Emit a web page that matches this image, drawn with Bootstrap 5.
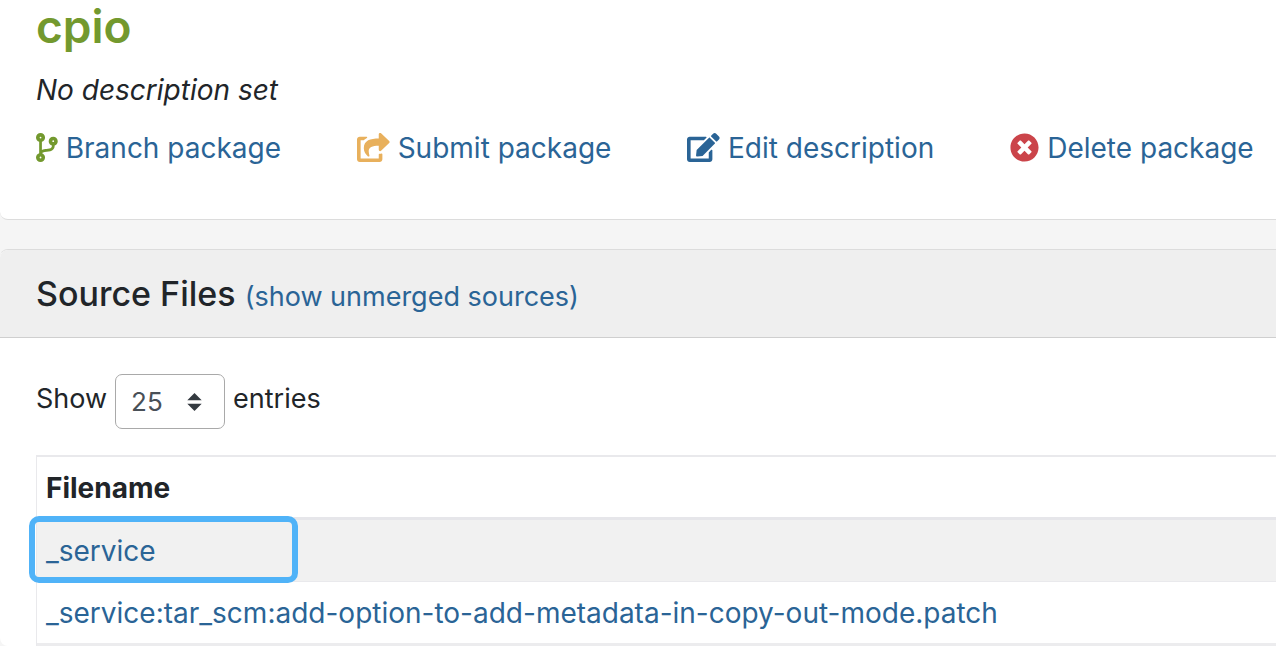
<!DOCTYPE html>
<html lang="en">
<head>
<meta charset="utf-8">
<meta name="viewport" content="width=device-width, initial-scale=1">
<title>cpio</title>
<link href="https://cdn.jsdelivr.net/npm/bootstrap@5.3.0/dist/css/bootstrap.min.css" rel="stylesheet">
<style>
  body { font-family: Inter, Roboto, sans-serif; font-size: 28px; line-height: 42px; color: #212529; background: #f5f5f5; overflow-x: hidden; }
  a { color: #2a6496; text-decoration: none; }
  a:hover { text-decoration: underline; }
  .panel { border: 1px solid #dcdcdc; border-left: 0; border-right: 0; border-radius: 8px 0 0 8px; }
  .package-panel { border-top: 0; border-radius: 0 0 0 8px; margin-bottom: 29px; }
  .panel .card-body, .panel .card-header { padding-left: 36px; padding-right: 0; }
  .package-panel .card-body { padding-top: 0; padding-bottom: 50px; }
  .package-name { font-size: 46px; line-height: 52px; font-weight: 600; color: #73992e; margin-bottom: 17px; }
  .description { margin-bottom: 16px; }
  .actions { gap: 76px; }
  .actions a { display: flex; align-items: center; gap: 8px; }
  .actions svg { height: 29px; margin-bottom: 2px; fill: currentColor; }
  .tone-branch { color: #73992e; }
  .tone-submit { color: #e8b05c; }
  .tone-delete { color: #cb444a; }
  .source-panel .card-header { background: #efefef; border-bottom: 1px solid #cfcfcf; border-radius: 8px 0 0 0; padding-top: 22px; padding-bottom: 22px; }
  .source-title { font-size: 34px; line-height: 43px; font-weight: 500; }
  .source-title a { font-size: 27px; line-height: 27px; font-weight: 400; }
  .source-panel .card-body { padding-top: 36px; padding-bottom: 0; }
  .length-row { gap: 8px; margin-bottom: 26px; font-size: 27px; line-height: 50px; }
  .length-select { width: 110px; height: 55px; padding: 0 16px 0 15px; font-size: 26px; color: #495057; border-color: #a9a9a9; border-radius: 7px;
    background-image: url("data:image/svg+xml,%3csvg xmlns='http://www.w3.org/2000/svg' viewBox='0 0 4 5'%3e%3cpath fill='%23343a40' d='M2 0L0 2h4zm0 5L0 3h4z'/%3e%3c/svg%3e");
    background-position: right 22px center; background-size: 15px 18px; }
  .files { border-collapse: separate; border-spacing: 0; border-left: 1px solid #e9e9ec; }
  .files th, .files td { color: #212529; border: 0; }
  .files th { padding: 10px 9px 8px; border-top: 2px solid #e9e9ec; border-bottom: 3px solid #e6e6ea; font-weight: 700; line-height: 42px; }
  .files td { padding: 11px 9px 9px; position: relative; border-bottom: 1px solid #e9e9ec; line-height: 41px; }
  .files tr.shaded td { background: #f1f1f1; }
  .files tr:last-child td { border-bottom: 3px solid #ececee; }
  .spotlight { position: absolute; left: -8px; top: -4px; width: 269px; height: 67px; border: 6px solid #50b3f8; border-radius: 10px; pointer-events: none; }
</style>
<script src="https://cdn.jsdelivr.net/npm/bootstrap@5.3.0/dist/js/bootstrap.bundle.min.js" defer></script>
</head>
<body>
<main>
  <section class="card panel package-panel">
    <div class="card-body">
      <h1 class="package-name">cpio</h1>
      <p class="description fst-italic">No description set</p>
      <ul class="actions list-unstyled d-flex mb-0 text-nowrap">
        <li><a href="#"><svg class="tone-branch" viewBox="0 0 384 512" aria-hidden="true"><path d="M384 144c0-44.2-35.8-80-80-80s-80 35.8-80 80c0 36.4 24.3 67.1 57.5 76.8-.6 16.1-4.2 28.5-11 36.9-15.4 19.2-49.3 22.4-85.2 25.7-28.2 2.6-57.4 5.4-81.3 16.9v-144c32.5-10.2 56-40.5 56-76.3 0-44.2-35.8-80-80-80S0 35.8 0 80c0 35.8 23.5 66.1 56 76.3v199.3C23.5 365.9 0 396.2 0 432c0 44.2 35.8 80 80 80s80-35.8 80-80c0-34-21.2-63.1-51.2-74.6 3.1-5.2 7.8-9.8 14.9-13.4 16.2-8.2 40.4-10.4 66.1-12.8 42.2-3.9 90-8.4 118.2-43.4 14-17.4 21.1-39.8 21.6-67.9 31.6-10.8 54.4-40.7 54.4-75.9zM80 64c8.800 0 16 7.200 16 16s-7.200 16-16 16-16-7.200-16-16 7.200-16 16-16zm0 384c-8.800 0-16-7.200-16-16s7.200-16 16-16 16 7.200 16 16-7.200 16-16 16zm224-320c8.800 0 16 7.200 16 16s-7.200 16-16 16-16-7.200-16-16 7.200-16 16-16z"/></svg><span>Branch package</span></a></li>
        <li><a href="#"><svg class="tone-submit" viewBox="0 0 576 512" aria-hidden="true"><path d="M568.482 177.448L424.479 313.433C409.3 327.768 384 317.14 384 295.985v-71.963c-144.575.97-205.566 35.113-164.775 171.353 4.483 14.973-12.846 26.567-25.006 17.33C155.252 383.105 120 326.488 120 269.339c0-143.937 117.599-172.5 264-173.312V24.012c0-21.174 25.317-31.768 40.479-17.448l144.003 135.988c10.02 9.463 10.028 25.425 0 34.896zM384 379.128V448H64V128h50.916a11.99 11.99 0 0 0 8.648-3.693c14.953-15.568 32.237-27.89 51.014-37.676C185.708 80.83 181.584 64 169.033 64H48C21.49 64 0 85.49 0 112v352c0 26.51 21.49 48 48 48h352c26.51 0 48-21.49 48-48v-88.806c0-8.288-8.197-14.066-16.011-11.302a71.83 71.83 0 0 1-34.189 3.377c-7.27-1.046-13.8 4.514-13.8 11.859z"/></svg><span>Submit package</span></a></li>
        <li><a href="#"><svg viewBox="0 0 576 512" aria-hidden="true"><path d="M402.6 83.2l90.2 90.2c3.8 3.8 3.8 10 0 13.8L274.4 405.6l-92.8 10.3c-12.4 1.4-22.9-9.1-21.5-21.5l10.3-92.8L388.8 83.2c3.8-3.8 10-3.8 13.8 0zm162-22.9l-48.8-48.8c-15.2-15.2-39.9-15.2-55.2 0l-35.4 35.4c-3.8 3.8-3.8 10 0 13.8l90.2 90.2c3.8 3.8 10 3.8 13.8 0l35.400-35.400c15.200-15.300 15.200-40 0-55.200zM384 346.2V448H64V128h229.8c3.2 0 6.2-1.3 8.5-3.5l40-40c7.6-7.6 2.2-20.5-8.5-20.5H48C21.5 64 0 85.5 0 112v352c0 26.5 21.5 48 48 48h352c26.5 0 48-21.5 48-48V306.2c0-10.7-12.9-16-20.5-8.5l-40 40c-2.2 2.3-3.5 5.3-3.5 8.5z"/></svg><span>Edit description</span></a></li>
        <li><a href="#"><svg class="tone-delete" viewBox="0 0 512 512" aria-hidden="true"><path d="M256 8C119 8 8 119 8 256s111 248 248 248 248-111 248-248S393 8 256 8zm121.6 313.1c4.7 4.7 4.7 12.3 0 17L338 377.6c-4.7 4.7-12.3 4.7-17 0L256 312l-65.1 65.6c-4.7 4.7-12.3 4.7-17 0L134.4 338c-4.7-4.7-4.7-12.3 0-17l65.600-65-65.600-65.100c-4.700-4.700-4.700-12.300 0-17l39.600-39.600c4.700-4.700 12.300-4.700 17 0l65 65.700 65.100-65.600c4.700-4.700 12.300-4.700 17 0l39.600 39.600c4.700 4.700 4.700 12.300 0 17L312 256l65.600 65.100z"/></svg><span>Delete package</span></a></li>
      </ul>
    </div>
  </section>

  <section class="card panel source-panel border-bottom-0">
    <div class="card-header">
      <h2 class="source-title mb-0">Source Files <a href="#">(show unmerged sources)</a></h2>
    </div>
    <div class="card-body">
      <div class="length-row d-flex align-items-start">
        <label for="length">Show</label>
        <select class="form-select length-select" id="length" aria-label="Show entries">
          <option>10</option>
          <option selected>25</option>
          <option>50</option>
          <option>100</option>
        </select>
        <span>entries</span>
      </div>
      <table class="table files mb-0">
        <thead><tr><th scope="col">Filename</th></tr></thead>
        <tbody>
          <tr class="shaded"><td><a href="#">_service</a><span class="spotlight"></span></td></tr>
          <tr><td><a href="#">_service:tar_scm:add-option-to-add-metadata-in-copy-out-mode.patch</a></td></tr>
        </tbody>
      </table>
    </div>
  </section>
</main>
</body>
</html>
